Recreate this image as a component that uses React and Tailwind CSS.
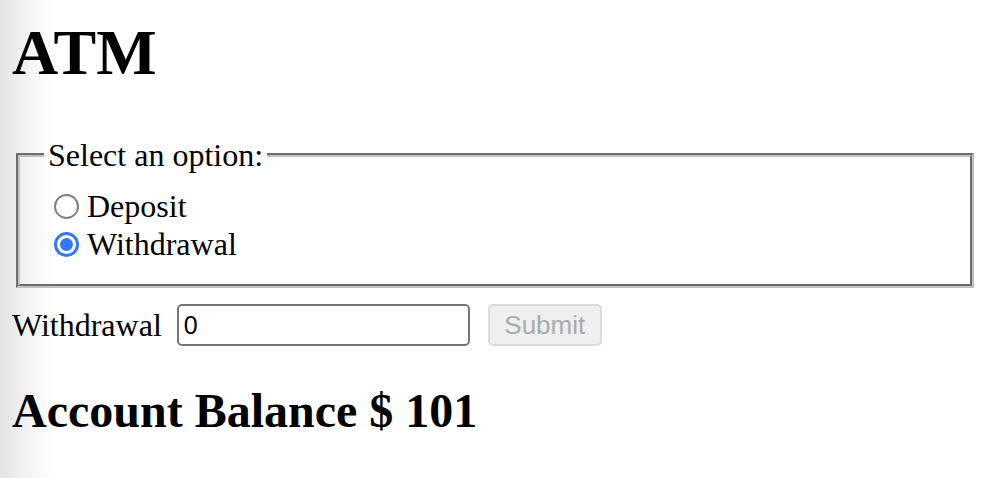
export default function App() {
  return (
    <div className="relative min-h-[478px] bg-white text-black font-['Liberation_Serif','Times_New_Roman',serif]">
      <div className="pointer-events-none absolute inset-y-0 left-0 w-[54px] bg-linear-to-r from-[#e3e3e3] via-[#f3f3f3] to-white/0" />
      <div className="relative px-[12px]">
        <h1 className="pt-[16px] text-[64px] font-bold leading-[74px]">ATM</h1>

        <fieldset className="mx-[4px] mt-[47px] border-4 border-[#c0c0c0] [border-style:groove] px-[24px] pt-[14px] pb-[21px]">
          <legend className="px-[4px] text-[32px] leading-[36px]">Select an option:</legend>

          <label className="flex h-[38px] items-center text-[32px] leading-[38px]">
            <span className="ml-[10px] mr-[8px] block h-[25px] w-[25px] shrink-0 rounded-full border-2 border-[#808080] bg-white" />
            <span>Deposit</span>
          </label>

          <label className="flex h-[38px] items-center text-[32px] leading-[38px]">
            <span className="ml-[10px] mr-[8px] flex h-[25px] w-[25px] shrink-0 items-center justify-center rounded-full bg-[#3478f6]">
              <span className="flex h-[19px] w-[19px] items-center justify-center rounded-full bg-white">
                <span className="block h-[13px] w-[13px] rounded-full bg-[#3478f6]" />
              </span>
            </span>
            <span>Withdrawal</span>
          </label>
        </fieldset>

        <div className="mt-[16px] flex h-[42px] items-center">
          <span className="text-[32px] leading-[38px]">Withdrawal</span>
          <input
            type="text"
            defaultValue="0"
            className="ml-[15px] h-[42px] w-[293px] rounded-[5px] border-2 border-[#767676] bg-white pl-[5px] font-['Liberation_Sans',Arial,sans-serif] text-[25px] text-black outline-none"
          />
          <button
            type="button"
            disabled
            className="ml-[18px] h-[42px] w-[114px] rounded-[5px] border-2 border-[#dcdcdc] bg-[#efefef] font-['Liberation_Sans',Arial,sans-serif] text-[26px] leading-[38px] text-[#ababab]"
          >
            Submit
          </button>
        </div>

        <h2 className="mt-[37px] text-[48px] font-bold leading-[56px]">Account Balance $ 101</h2>
      </div>
    </div>
  );
}
